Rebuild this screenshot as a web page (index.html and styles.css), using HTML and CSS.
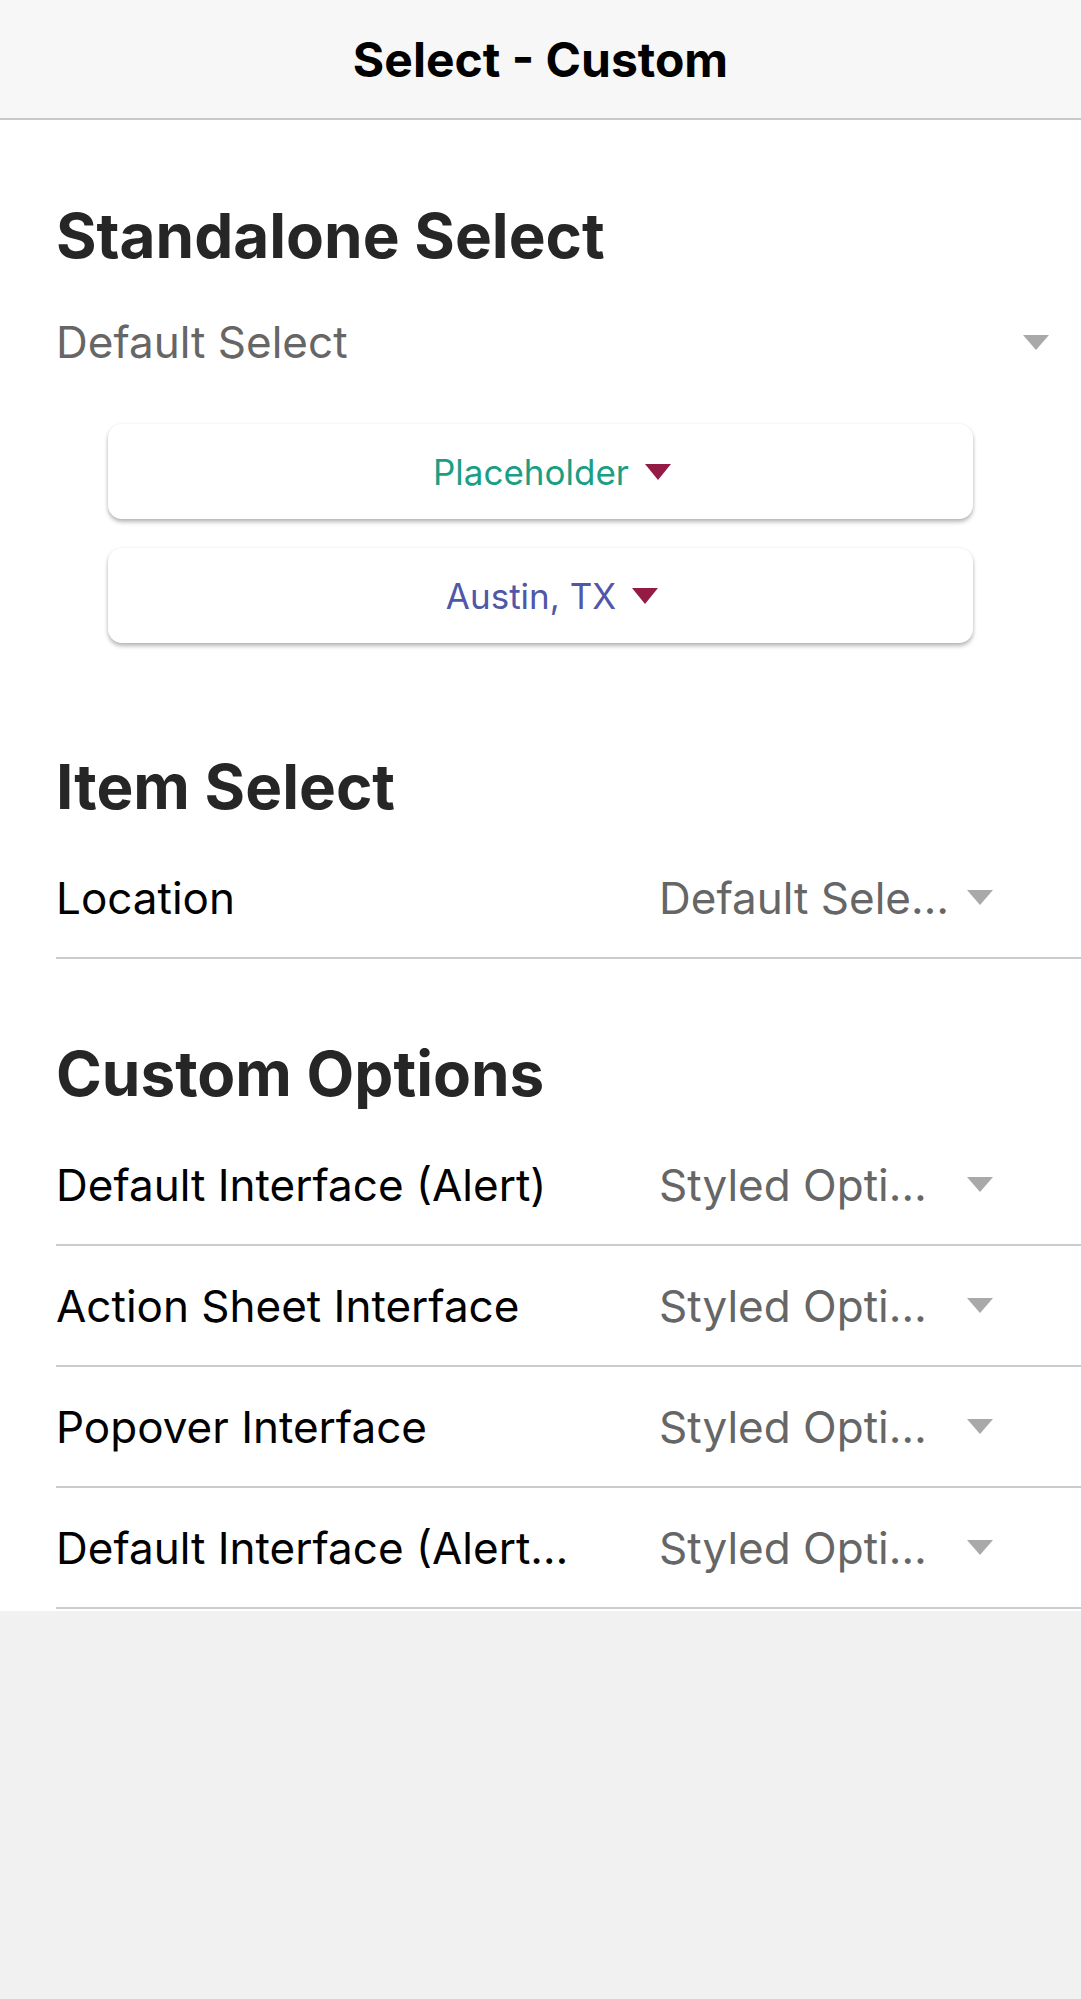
FILE: index.html
```html
<!DOCTYPE html>
<html lang="en">
<head>
<meta charset="utf-8">
<title>Select - Custom</title>
<link rel="stylesheet" href="styles.css">
</head>
<body>
<header class="toolbar">
  <h1 class="toolbar-title">Select - Custom</h1>
</header>
<main class="content">
  <h2 class="section-title first">Standalone Select</h2>
  <div class="standalone">
    <span class="standalone-text">Default Select</span>
    <span class="arrow arrow-gray"></span>
  </div>
  <div class="card">
    <span class="card-text placeholder">Placeholder</span>
    <span class="arrow arrow-red"></span>
  </div>
  <div class="card second">
    <span class="card-text austin">Austin, TX</span>
    <span class="arrow arrow-red"></span>
  </div>

  <h2 class="section-title item-title">Item Select</h2>
  <div class="list">
    <div class="item">
      <span class="item-label">Location</span>
      <span class="item-value">Default Select Option</span>
      <span class="arrow arrow-gray"></span>
    </div>
  </div>

  <h2 class="section-title custom-title">Custom Options</h2>
  <div class="list">
    <div class="item">
      <span class="item-label">Default Interface (Alert)</span>
      <span class="item-value">Styled Options</span>
      <span class="arrow arrow-gray"></span>
    </div>
    <div class="item">
      <span class="item-label">Action Sheet Interface</span>
      <span class="item-value">Styled Options</span>
      <span class="arrow arrow-gray"></span>
    </div>
    <div class="item">
      <span class="item-label">Popover Interface</span>
      <span class="item-value">Styled Options</span>
      <span class="arrow arrow-gray"></span>
    </div>
    <div class="item">
      <span class="item-label">Default Interface (Alert) with Header</span>
      <span class="item-value">Styled Options</span>
      <span class="arrow arrow-gray"></span>
    </div>
  </div>
</main>
</body>
</html>
```

FILE: styles.css
```css
html, body {
  margin: 0;
  padding: 0;
}
body {
  background: #f1f1f1;
  font-family: Inter, "Noto Sans", "Liberation Sans", sans-serif;
  color: #000;
}
.toolbar {
  height: 118px;
  background: #f7f7f7;
  border-bottom: 2px solid #c9c9c9;
  display: flex;
  align-items: center;
  justify-content: center;
}
.toolbar-title {
  margin: 0;
  font-size: 48px;
  font-weight: 700;
  color: #000;
}
.content {
  background: #fff;
  padding: 0 0 2px 56px;
}
.section-title {
  margin: 0;
  height: 80px;
  line-height: 80px;
  font-size: 62px;
  font-weight: 700;
  color: #262626;
}
.section-title.first {
  padding-top: 76px;
}
.section-title.item-title {
  padding-top: 104px;
}
.section-title.custom-title {
  padding-top: 75px;
}
.standalone {
  display: flex;
  align-items: center;
  height: 80px;
  margin-top: 26px;
  padding-right: 32px;
}
.standalone-text {
  flex: 1;
  font-size: 44px;
  color: #666;
}
.arrow {
  width: 0;
  height: 0;
  border-left: 13px solid transparent;
  border-right: 13px solid transparent;
  border-top: 15px solid #a9a9a9;
  flex: none;
}
.arrow-red {
  border-top: 16px solid #941b45;
}
.card {
  margin: 42px 108px 0 52px;
  height: 95px;
  padding-left: 23px;
  background: #fff;
  border-radius: 14px;
  box-shadow: 0 3px 4px rgba(0, 0, 0, 0.28), 0 0 3px rgba(0, 0, 0, 0.06);
  display: flex;
  align-items: center;
  justify-content: center;
  gap: 16px;
}
.card.second {
  margin-top: 29px;
}
.card-text {
  font-size: 35px;
}
.placeholder {
  color: #1a9e84;
}
.austin {
  color: #5157a8;
}
.list {
  margin-top: 11px;
}
.item {
  display: flex;
  align-items: center;
  height: 121px;
  box-sizing: border-box;
  border-bottom: 2px solid #cbcbd0;
  padding-right: 88px;
}
.item-label {
  flex: 1;
  min-width: 0;
  font-size: 44px;
  white-space: nowrap;
  overflow: hidden;
  text-overflow: ellipsis;
  margin-right: 81px;
}
.item-value {
  width: 291px;
  flex: none;
  font-size: 44px;
  color: #666;
  white-space: nowrap;
  overflow: hidden;
  text-overflow: ellipsis;
  margin-right: 17px;
}
```
